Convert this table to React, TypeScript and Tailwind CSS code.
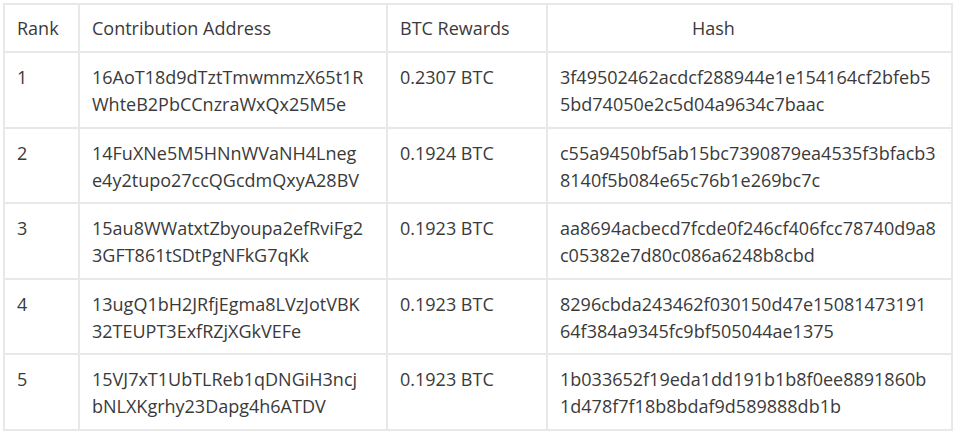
const ROWS = [
  {
    rank: "1",
    address: ["16AoT18d9dTztTmwmmzX65t1R", "WhteB2PbCCnzraWxQx25M5e"],
    reward: "0.2307 BTC",
    hash: ["3f49502462acdcf288944e1e154164cf2bfeb5", "5bd74050e2c5d04a9634c7baac"],
  },
  {
    rank: "2",
    address: ["14FuXNe5M5HNnWVaNH4Lneg", "e4y2tupo27ccQGcdmQxyA28BV"],
    reward: "0.1924 BTC",
    hash: ["c55a9450bf5ab15bc7390879ea4535f3bfacb3", "8140f5b084e65c76b1e269bc7c"],
  },
  {
    rank: "3",
    address: ["15au8WWatxtZbyoupa2efRviFg2", "3GFT861tSDtPgNFkG7qKk"],
    reward: "0.1923 BTC",
    hash: ["aa8694acbecd7fcde0f246cf406fcc78740d9a8", "c05382e7d80c086a6248b8cbd"],
  },
  {
    rank: "4",
    address: ["13ugQ1bH2JRfjEgma8LVzJotVBK", "32TEUPT3ExfRZjXGkVEFe"],
    reward: "0.1923 BTC",
    hash: ["8296cbda243462f030150d47e15081473191", "64f384a9345fc9bf505044ae1375"],
  },
  {
    rank: "5",
    address: ["15VJ7xT1UbTLReb1qDNGiH3ncj", "bNLXKgrhy23Dapg4h6ATDV"],
    reward: "0.1923 BTC",
    hash: ["1b033652f19eda1dd191b1b8f0ee8891860b", "1d478f7f18b8bdaf9d589888db1b"],
  },
];

const border = "border-2 border-[#e8e8e8] px-[12px]";
const th = `${border} align-middle text-left font-normal`;
const td = `${border} align-top pt-[11px]`;

export default function App() {
  return (
    <div className="w-[955px] h-[435px] bg-white pt-[3px] pl-[3px] font-['Open_Sans','Noto_Sans',sans-serif] text-[18px] leading-[27px] text-[#3a3a3a]">
      <table className="border-collapse table-fixed w-[948px]">
        <colgroup>
          <col className="w-[75px]" />
          <col className="w-[308px]" />
          <col className="w-[160px]" />
          <col className="w-[405px]" />
        </colgroup>
        <thead>
          <tr className="h-[48px]">
            <th className={th}>Rank</th>
            <th className={th}>Contribution Address</th>
            <th className={th}>BTC Rewards</th>
            <th className={`${th} pl-[144px]`}>Hash</th>
          </tr>
        </thead>
        <tbody>
          {ROWS.map((r) => (
            <tr key={r.rank} className="h-[75.5px]">
              <td className={td}>{r.rank}</td>
              <td className={td}>
                {r.address.map((l) => (
                  <div key={l}>{l}</div>
                ))}
              </td>
              <td className={td}>{r.reward}</td>
              <td className={td}>
                {r.hash.map((l) => (
                  <div key={l}>{l}</div>
                ))}
              </td>
            </tr>
          ))}
        </tbody>
      </table>
    </div>
  );
}
